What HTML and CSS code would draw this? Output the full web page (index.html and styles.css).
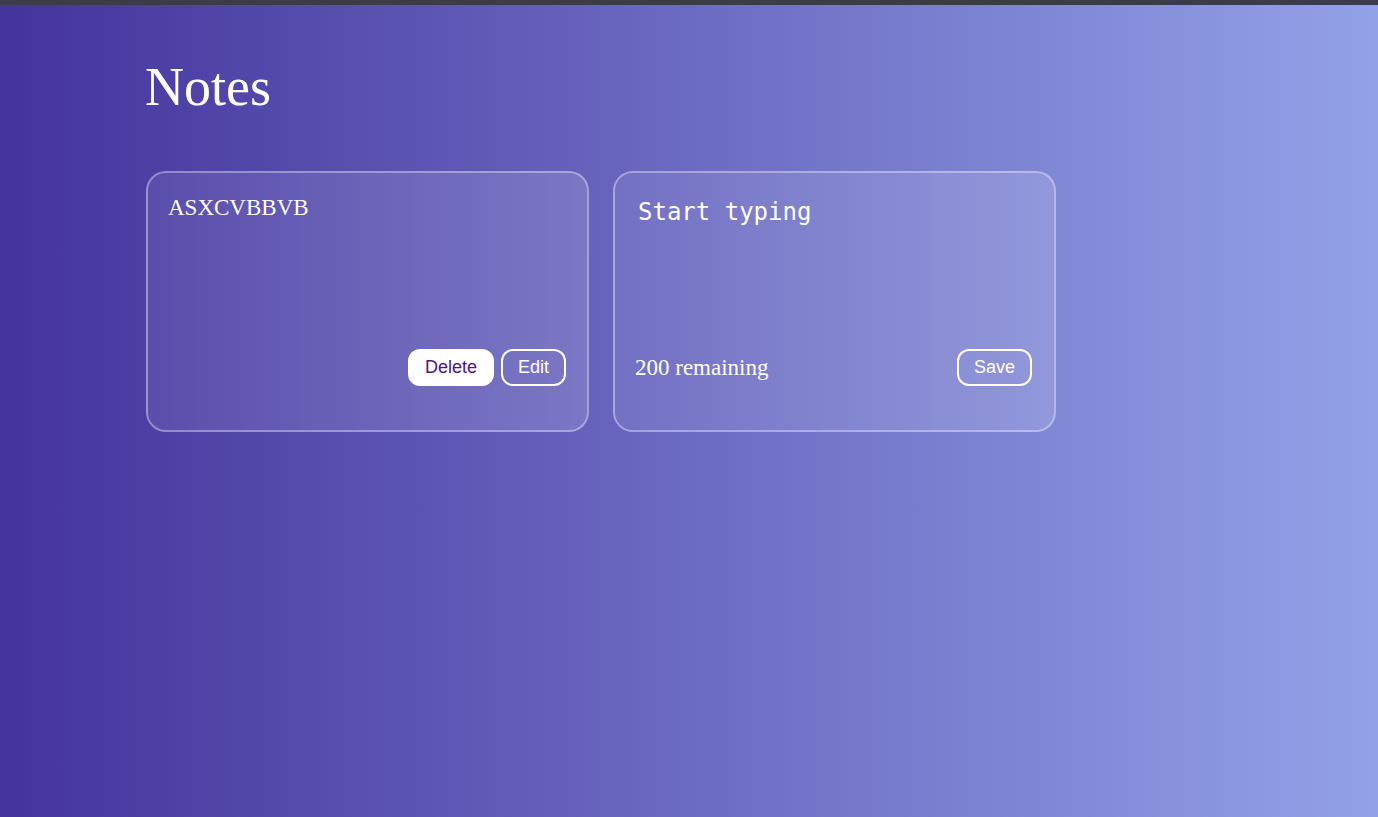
FILE: index.html
```html
<!DOCTYPE html>
<html lang="en">
<head>
<meta charset="utf-8">
<title>Notes</title>
<link rel="stylesheet" href="styles.css">
</head>
<body>
<div class="topbar"></div>
<main class="page">
  <h1 class="title">Notes</h1>
  <section class="notes">
    <article class="card">
      <p class="note-text">ASXCVBBVB</p>
      <div class="card-footer end">
        <button class="btn btn-solid">Delete</button>
        <button class="btn">Edit</button>
      </div>
    </article>
    <article class="card">
      <textarea class="editor" placeholder="Start typing"></textarea>
      <div class="card-footer between">
        <span class="remaining">200 remaining</span>
        <button class="btn">Save</button>
      </div>
    </article>
  </section>
</main>
</body>
</html>
```
FILE: styles.css
```css
* { box-sizing: border-box; }
html, body { height: 100%; }
body {
  margin: 0;
  background: linear-gradient(to right, #44339c, #93a2e8);
  color: #fff;
  font-family: "Liberation Serif", "Times New Roman", serif;
  min-height: 817px;
}
.topbar {
  height: 5px;
  background: #3b3b4c;
}
.page {
  padding: 52px 0 0 145px;
}
.title {
  margin: 0;
  font-size: 54px;
  font-weight: normal;
  line-height: 60px;
}
.notes {
  display: flex;
  gap: 24px;
  margin-top: 54px;
  padding-left: 1px;
}
.card {
  width: 443px;
  height: 261px;
  border: 2px solid rgba(255, 255, 255, 0.35);
  border-radius: 20px;
  background: linear-gradient(to right, rgba(255,255,255,0.08), rgba(255,255,255,0.14));
  padding: 22px 21px 44px 20px;
  display: flex;
  flex-direction: column;
  justify-content: space-between;
}
.note-text {
  margin: 0;
  font-size: 23px;
  line-height: 26px;
}
.editor {
  flex: 1;
  margin: 3px 0 0 0;
  border: none;
  padding: 0 0 0 3px;
  background: transparent;
  color: #fff;
  resize: none;
  outline: none;
  font-family: "DejaVu Sans Mono", "Liberation Mono", monospace;
  font-size: 24px;
  line-height: 28px;
}
.editor::placeholder { color: #fff; opacity: 1; }
.card-footer {
  display: flex;
  align-items: center;
  gap: 7px;
}
.card-footer.end { justify-content: flex-end; }
.card-footer.between { justify-content: space-between; padding-right: 1px; }
.remaining {
  font-size: 23px;
}
.btn {
  font-family: "Liberation Sans", Arial, sans-serif;
  font-size: 18px;
  line-height: 21px;
  height: 37px;
  padding: 6px 15px;
  border: 2px solid #fff;
  border-radius: 12px;
  background: transparent;
  color: #fff;
}
.btn-solid {
  background: #fff;
  color: #4a148c;
}
```
